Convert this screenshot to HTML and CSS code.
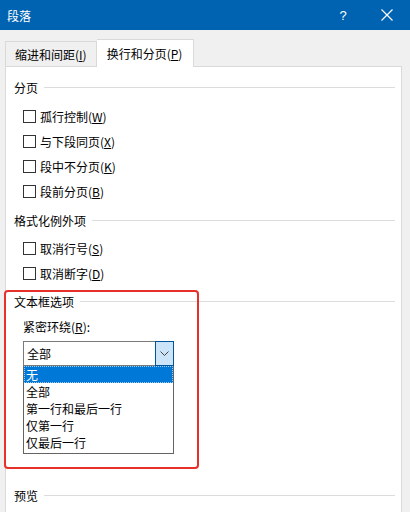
FILE: index.html
```html
<!DOCTYPE html>
<html lang="zh">
<head>
<meta charset="utf-8">
<link rel="stylesheet" href="styles.css">
</head>
<body>
<div class="window">
  <div class="titlebar">
    <span class="title">段落</span>
    <span class="tb-btn help">?</span>
    <span class="tb-btn close">
      <svg width="12" height="12" viewBox="0 0 12 12"><path d="M0.5 0.5 L11.5 11.5 M11.5 0.5 L0.5 11.5" stroke="#fff" stroke-width="1.2" fill="none"/></svg>
    </span>
  </div>
  <div class="tabs">
    <div class="tab">缩进和间距(<u>I</u>)</div>
    <div class="tab active">换行和分页(<u>P</u>)</div>
  </div>
  <div class="panel">
    <div class="section-head"><span>分页</span><i class="rule"></i></div>
    <div class="checks">
      <label class="check"><span class="box"></span>孤行控制(<u>W</u>)</label>
      <label class="check"><span class="box"></span>与下段同页(<u>X</u>)</label>
      <label class="check"><span class="box"></span>段中不分页(<u>K</u>)</label>
      <label class="check"><span class="box"></span>段前分页(<u>B</u>)</label>
    </div>
    <div class="section-head sec2"><span>格式化例外项</span><i class="rule"></i></div>
    <div class="checks checks2">
      <label class="check"><span class="box"></span>取消行号(<u>S</u>)</label>
      <label class="check"><span class="box"></span>取消断字(<u>D</u>)</label>
    </div>
    <div class="section-head sec3"><span>文本框选项</span><i class="rule"></i></div>
    <div class="field-label">紧密环绕(<u>R</u>):</div>
    <div class="combo">
      <span class="combo-value">全部</span>
      <span class="combo-btn">
        <svg width="9" height="5" viewBox="0 0 9 5"><path d="M0.5 0.5 L4.5 4.5 L8.5 0.5" stroke="#444" stroke-width="1" fill="none"/></svg>
      </span>
    </div>
    <ul class="list">
      <li class="selected">无</li>
      <li>全部</li>
      <li>第一行和最后一行</li>
      <li>仅第一行</li>
      <li>仅最后一行</li>
    </ul>
    <div class="section-head sec4"><span>预览</span><i class="rule"></i></div>
  </div>
  <div class="highlight"></div>
</div>
</body>
</html>
```
FILE: styles.css
```css
html, body {
  margin: 0;
  padding: 0;
}
body {
  width: 410px;
  height: 512px;
  overflow: hidden;
  background: #f0f0f0;
  font-family: "Noto Sans CJK SC", "Noto Sans", sans-serif;
  font-size: 12px;
  color: #000;
}
u {
  text-decoration: underline;
  text-underline-offset: 1px;
}
.window {
  position: relative;
  height: 512px;
  display: flex;
  flex-direction: column;
}
.titlebar {
  height: 30px;
  background: #0063b1;
  color: #fff;
  display: flex;
  align-items: center;
  padding-left: 7px;
  flex-shrink: 0;
}
.title {
  flex: 1;
  font-size: 12px;
}
.tb-btn {
  display: flex;
  align-items: center;
  justify-content: center;
  height: 30px;
}
.help {
  width: 12px;
  margin-right: 32px;
  font-family: "Liberation Sans", sans-serif;
  font-size: 13px;
}
.close {
  width: 12px;
  margin-right: 17px;
}
.tabs {
  display: flex;
  align-items: flex-end;
  padding-left: 5px;
  margin-top: 9px;
  height: 27px;
  position: relative;
  z-index: 2;
  flex-shrink: 0;
}
.tab {
  height: 25px;
  box-sizing: border-box;
  border: 1px solid #d9d9d9;
  border-bottom: none;
  padding: 0 9px 0 9px;
  display: flex;
  align-items: center;
  background: #f0f0f0;
  margin-bottom: 0;
}
.tab.active {
  height: 28px;
  background: #fff;
  border-left: none;
  padding: 0 10px 0 10px;
  margin-bottom: -1px;
  width: 97px;
}
.panel {
  flex: 1;
  margin: 0 8px 0 5px;
  background: #fff;
  border: 1px solid #d9d9d9;
  border-bottom: none;
  padding: 12px 6px 0 8px;
  display: flex;
  flex-direction: column;
}
.section-head {
  height: 16px;
  display: flex;
  align-items: center;
}
.section-head .rule {
  flex: 1;
  border-top: 1px solid #dcdcdc;
  margin-left: 6px;
  margin-top: 1px;
}
.checks {
  margin-top: 9px;
  padding-left: 9px;
  display: flex;
  flex-direction: column;
}
.check {
  height: 25px;
  display: flex;
  align-items: center;
}
.box {
  width: 13px;
  height: 13px;
  box-sizing: border-box;
  border: 1px solid #333;
  background: #fff;
  margin-right: 4px;
}
.sec2 { margin-top: 8px; }
.checks2 { margin-top: 8px; }
.sec3 { margin-top: 7px; }
.field-label {
  height: 16px;
  line-height: 16px;
  margin-top: 10px;
  padding-left: 9px;
}
.combo {
  margin-top: 6px;
  margin-left: 9px;
  width: 151px;
  height: 25px;
  box-sizing: border-box;
  border: 1px solid #7a7a7a;
  display: flex;
  align-items: stretch;
  background: #fff;
}
.combo-value {
  flex: 1;
  display: flex;
  align-items: center;
  padding-left: 3px;
}
.combo-btn {
  width: 17px;
  margin: -1px -1px -1px 0;
  background: #cce4f7;
  border: 1px solid #005499;
  display: flex;
  align-items: center;
  justify-content: center;
}
.list {
  list-style: none;
  margin: 0 0 0 9px;
  padding: 0 0 2px 0;
  width: 151px;
  box-sizing: border-box;
  border: 1px solid #646464;
  border-top: none;
  background: #fff;
}
.list li {
  height: 17px;
  line-height: 17px;
  padding-left: 2px;
  box-sizing: border-box;
}
.list li.selected {
  background: #0078d7;
  color: #fff;
  outline: 1px dotted #9ec9ef;
  outline-offset: -1px;
}
.sec4 { margin-top: 33px; }
.highlight {
  position: absolute;
  left: 4px;
  top: 290px;
  width: 195px;
  height: 179px;
  box-sizing: border-box;
  border: 2px solid #e8302a;
  border-radius: 4px;
  pointer-events: none;
}
```
